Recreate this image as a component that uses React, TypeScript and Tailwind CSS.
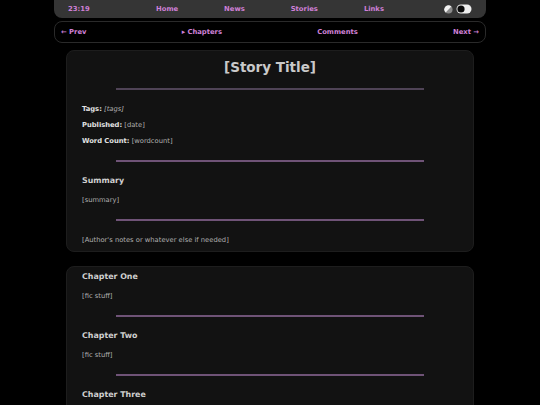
import React from 'react';

const link = 'text-[#cf80d7] font-bold';

const Divider = ({ dim = false }: { dim?: boolean }) => (
  <div className={`mx-auto w-[308px] h-[2px] ${dim ? 'bg-[#4f4356]' : 'bg-[#6f5377]'}`} />
);

const Meta = ({ label, children }: { label: string; children: React.ReactNode }) => (
  <p className="text-[6.75px] leading-[10px] text-[#b0b0b0]">
    <span className="font-bold text-[#e2e2e2]">{label}</span> {children}
  </p>
);

const Chapter = ({ title, last = false }: { title: string; last?: boolean }) => (
  <>
    <h3 className="text-[7.9px] leading-[12px] font-bold text-[#cfcfcf]">{title}</h3>
    {!last && (
      <>
        <p className="mt-[8px] text-[6.75px] leading-[10px] text-[#b0b0b0]">[fic stuff]</p>
        <div className="mt-[14px] mb-[13px]">
          <Divider />
        </div>
      </>
    )}
  </>
);

export default function App() {
  return (
    <div className="min-h-screen bg-black font-['DejaVu_Sans',sans-serif] overflow-hidden h-[405px]">
      <div className="w-[432px] mx-auto">
        {/* Top bar */}
        <div className="h-[18px] bg-[#353535] rounded-b-[8px] grid grid-cols-[1fr_auto_1fr] items-center px-[14px] text-[6.8px]">
          <span className={`${link} text-[#c27ccb]`}>23:19</span>
          <nav className="flex gap-[46px]">
            <span className={link}>Home</span>
            <span className={link}>News</span>
            <span className={link}>Stories</span>
            <span className={link}>Links</span>
          </nav>
          <div className="flex items-center justify-end gap-[3px]">
            <svg width="9" height="9" viewBox="0 0 10 10">
              <circle cx="5" cy="5" r="4.5" fill="#8a8a8a" />
              <path d="M8.2 1.8 A4.5 4.5 0 0 0 1.8 8.2 Z" fill="#f2f2f2" />
            </svg>
            <svg width="16" height="10" viewBox="0 0 16 10">
              <rect x="0.5" y="0.5" width="15" height="9" rx="4.5" fill="#eeeeee" />
              <circle cx="5" cy="5" r="3.6" fill="#0a0a0a" />
            </svg>
          </div>
        </div>

        {/* Chapter nav */}
        <div className="mt-[3px] h-[22px] border border-[#2a2a2a] rounded-[8px] flex items-center justify-between px-[6px] text-[6.8px]">
          <span className={link}>← Prev</span>
          <span className={link}>▸ Chapters</span>
          <span className={link}>Comments</span>
          <span className={link}>Next →</span>
        </div>
      </div>

      <div className="w-[408px] mx-auto mt-[7px] flex flex-col gap-[14px]">
        {/* Story info card */}
        <section className="bg-[#121212] border border-[#1d1d1d] rounded-[8px] px-[15px] pt-[7px] pb-[6px]">
          <h1 className="text-center text-[13.5px] leading-[18px] font-bold text-[#c9c9c9]">[Story Title]</h1>
          <div className="mt-[12px]">
            <Divider dim />
          </div>
          <div className="mt-[14px] flex flex-col gap-[6px]">
            <Meta label="Tags:">
              <i>[tags]</i>
            </Meta>
            <Meta label="Published:">[date]</Meta>
            <Meta label="Word Count:">[wordcount]</Meta>
          </div>
          <div className="mt-[14px]">
            <Divider />
          </div>
          <h2 className="mt-[13px] text-[7.9px] leading-[12px] font-bold text-[#cfcfcf]">Summary</h2>
          <p className="mt-[8px] text-[6.75px] leading-[10px] text-[#b0b0b0]">[summary]</p>
          <div className="mt-[14px]">
            <Divider />
          </div>
          <p className="mt-[14px] text-[6.75px] leading-[10px] text-[#b0b0b0]">
            [Author's notes or whatever else if needed]
          </p>
        </section>

        {/* Chapters card */}
        <section className="bg-[#121212] border border-[#1d1d1d] rounded-[8px] px-[15px] pt-[4px] pb-[20px]">
          <Chapter title="Chapter One" />
          <Chapter title="Chapter Two" />
          <Chapter title="Chapter Three" last />
        </section>
      </div>
    </div>
  );
}
